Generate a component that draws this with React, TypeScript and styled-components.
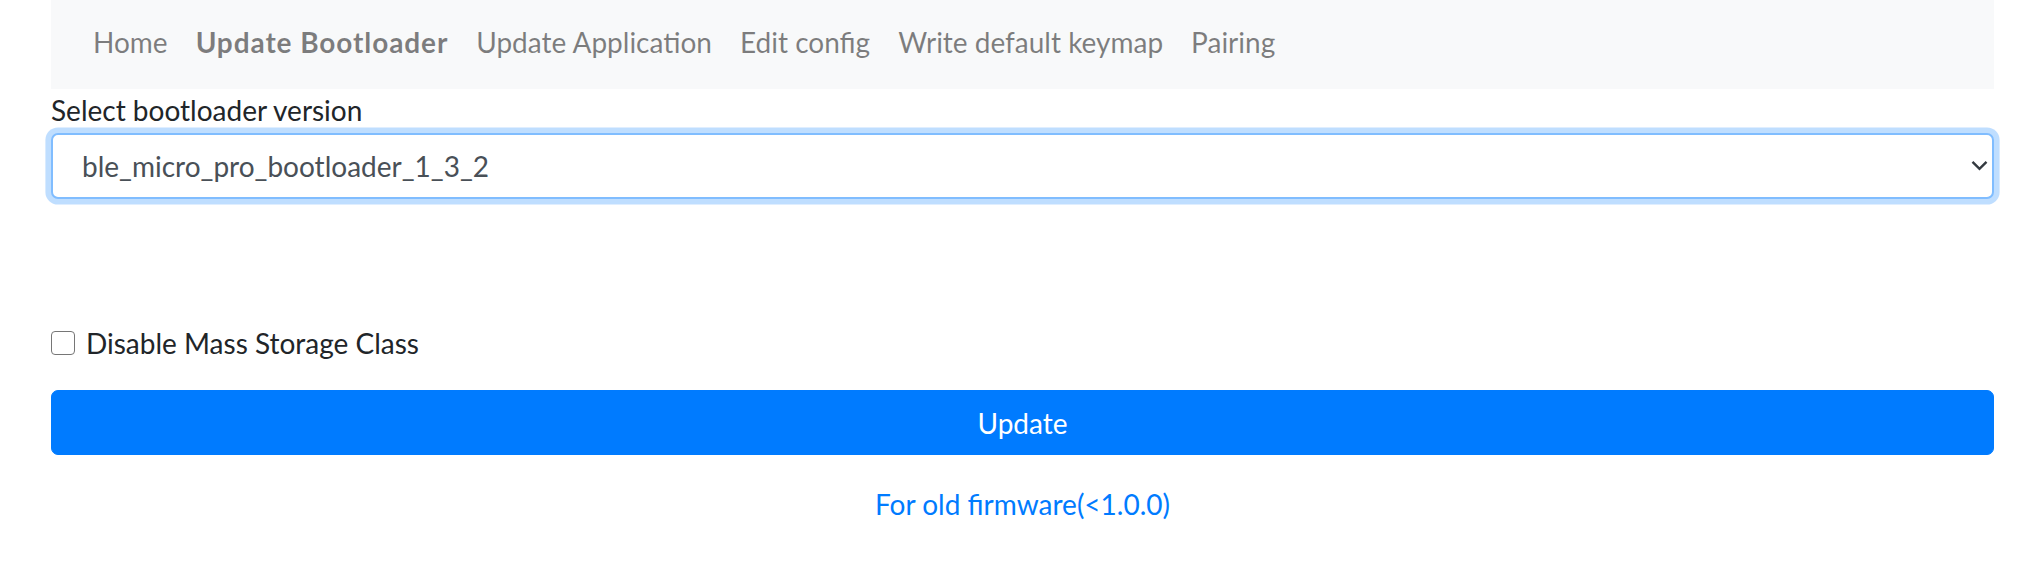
import React from 'react'
import styled, { createGlobalStyle } from 'styled-components'

const GlobalStyle = createGlobalStyle`
  html, body {
    margin: 0;
    padding: 0;
    background: #fff;
  }
  body {
    font-family: Lato, "Noto Sans", "Liberation Sans", sans-serif;
    font-size: 28px;
    line-height: 42px;
    color: #212529;
  }
  * {
    box-sizing: border-box;
  }
`

const Page = styled.div`
  padding: 0 37px 0 51px;
`

const NavBar = styled.nav`
  display: flex;
  align-items: flex-start;
  height: 89px;
  padding: 21px 28px 0;
  background: #f8f9fa;
`

const NavLink = styled.a<{ $active?: boolean }>`
  padding: 0 14px;
  color: rgba(0, 0, 0, 0.5);
  font-weight: ${(p) => (p.$active ? 700 : 400)};
  letter-spacing: ${(p) => (p.$active ? '0.9px' : 'normal')};
  text-decoration: none;
  white-space: nowrap;
  cursor: pointer;
`

const Label = styled.label`
  display: block;
  margin-bottom: 2px;
`

const SelectWrap = styled.div`
  position: relative;
  margin-bottom: 123px;
`

const Select = styled.select`
  display: block;
  width: 100%;
  height: 66px;
  padding: 0 60px 0 29px;
  font-family: inherit;
  font-size: 28px;
  color: #495057;
  background: #fff;
  border: 2px solid #80bdff;
  border-radius: 7px;
  box-shadow: 0 0 0 5.6px rgba(0, 123, 255, 0.25);
  appearance: none;
  outline: none;
`

const Chevron = styled.svg`
  position: absolute;
  right: 6px;
  top: 27px;
  width: 17px;
  height: 11px;
  pointer-events: none;
`

const CheckRow = styled.label`
  display: flex;
  align-items: center;
  gap: 11px;
  margin-bottom: 26px;
`

const Check = styled.input`
  appearance: none;
  flex: none;
  width: 24px;
  height: 24px;
  margin: 0;
  border: 1.8px solid #767676;
  border-radius: 4px;
  background: #fff;
`

const Button = styled.button`
  display: block;
  width: 100%;
  height: 65px;
  padding: 0;
  font-family: inherit;
  font-size: 28px;
  line-height: 42px;
  color: #fff;
  background: #007bff;
  border: 1.75px solid #007bff;
  border-radius: 7px;
  margin-bottom: 28px;
`

const OldLink = styled.a`
  display: block;
  text-align: center;
  color: #007bff;
  text-decoration: none;
`

const links = ['Home', 'Update Bootloader', 'Update Application', 'Edit config', 'Write default keymap', 'Pairing']

export default function App() {
  return (
    <>
      <GlobalStyle />
      <Page>
        <NavBar>
          {links.map((l) => (
            <NavLink key={l} $active={l === 'Update Bootloader'}>
              {l}
            </NavLink>
          ))}
        </NavBar>
        <Label htmlFor="bl">Select bootloader version</Label>
        <SelectWrap>
          <Select id="bl" defaultValue="ble_micro_pro_bootloader_1_3_2">
            <option>ble_micro_pro_bootloader_1_3_2</option>
          </Select>
          <Chevron viewBox="0 0 17 11">
            <path d="M1.5 1.8 L8.5 8.8 L15.5 1.8" fill="none" stroke="#343a40" strokeWidth="2.4" />
          </Chevron>
        </SelectWrap>
        <CheckRow>
          <Check type="checkbox" />
          Disable Mass Storage Class
        </CheckRow>
        <Button>Update</Button>
        <OldLink>For old firmware(&lt;1.0.0)</OldLink>
      </Page>
    </>
  )
}
